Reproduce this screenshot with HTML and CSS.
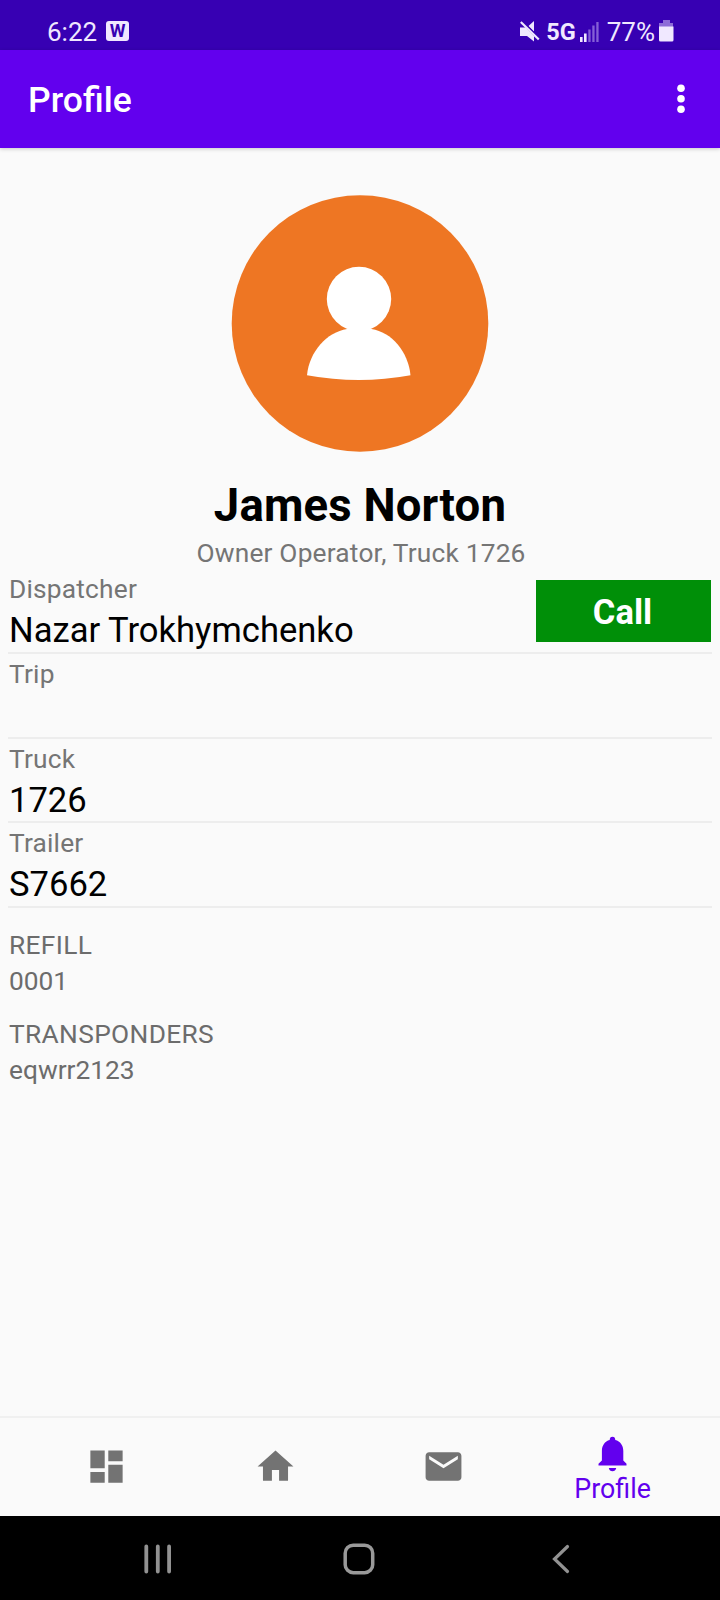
FILE: index.html
```html
<!DOCTYPE html>
<html lang="en">
<head>
<meta charset="utf-8">
<title>Profile</title>
<link rel="stylesheet" href="styles.css">
</head>
<body>
<div class="screen">
  <div class="status-bar">
    <span class="clock">6:22</span>
    <span class="badge">W</span>
    <span class="spacer"></span>
    <svg class="mute" width="20" height="22" viewBox="0 0 20 22" fill="#f0e8ff"><path d="M0 7.500h5.500l8.500 8.500v5.500L7 16H0zM8.500 6L14 1v10.500z"/><path d="M3.500 2.300L20 18.800" stroke="#3700b3" stroke-width="1.400"/><path d="M.8 2l18 17.500" stroke="#f0e8ff" stroke-width="2.200"/></svg>
    <span class="network">5G</span>
    <svg class="signal" width="20" height="21" viewBox="0 0 20 21"><path fill="#f0e8ff" d="M0 16h2.600v5H0zM4 12.500h2.600V21H4z"/><path fill="#8560d6" d="M8.300 8.500h2.300V21H8.300zM12.300 4.500h2.300V21h-2.300zM16.300 1h2.300v20h-2.300z"/></svg>
    <span class="percent">77%</span>
    <svg class="battery" width="15" height="22" viewBox="0 0 15 22"><path fill="#8d6bd8" d="M4 0h7v3h3v4H0V3h4z"/><path fill="#f0e8ff" d="M0 6.500h14.500V20q0 1.500-1.500 1.500H1.500Q0 21.500 0 20z"/></svg>
  </div>
  <header class="app-bar">
    <h1 class="title">Profile</h1>
    <svg class="more" width="8" height="30" viewBox="0 0 8 30" fill="#fff"><circle cx="4" cy="4.200" r="3.800"/><circle cx="4" cy="14.800" r="3.800"/><circle cx="4" cy="25.300" r="3.800"/></svg>
  </header>
  <main class="content">
    <svg class="avatar" width="258" height="258" viewBox="0 0 258 258"><circle cx="129" cy="128.500" r="128.300" fill="#ee7623"/><g fill="#fff"><circle cx="128" cy="104" r="32.200"/><path d="M76 180.300C78 157 96 137 116 134h24.500c20 3 37 23 39 46.300q-51.500 9.500-103.500 0z"/></g></svg>
    <h2 class="name">James Norton</h2>
    <p class="role">Owner Operator, Truck 1726</p>
    <section class="fields">
      <div class="field">
        <div class="field-text"><div class="label">Dispatcher</div><div class="value">Nazar Trokhymchenko</div></div>
        <button class="call">Call</button>
      </div>
      <div class="field"><div class="field-text"><div class="label">Trip</div><div class="value"></div></div></div>
      <div class="field"><div class="field-text"><div class="label">Truck</div><div class="value">1726</div></div></div>
      <div class="field"><div class="field-text"><div class="label">Trailer</div><div class="value">S7662</div></div></div>
    </section>
    <section class="extra"><div class="caps">REFILL</div><div>0001</div></section>
    <section class="extra"><div class="caps">TRANSPONDERS</div><div>eqwrr2123</div></section>
  </main>
  <nav class="tabs">
    <a class="tab"><svg width="43" height="43" viewBox="0 0 24 24" fill="#737373"><path d="M3 13h8V3H3v10zm0 8h8v-6H3v6zm10 0h8V11h-8v10zm0-18v6h8V3h-8z"/></svg></a>
    <a class="tab"><svg width="43" height="43" viewBox="0 0 24 24" fill="#737373"><path d="M10 20v-6h4v6h5v-8h3L12 3 2 12h3v8z"/></svg></a>
    <a class="tab"><svg width="43" height="43" viewBox="0 0 24 24" fill="#737373"><path d="M20 4H4c-1.100 0-1.990.9-1.990 2L2 18c0 1.100.9 2 2 2h16c1.100 0 2-.9 2-2V6c0-1.100-.9-2-2-2zm0 4l-8 5-8-5V6l8 5 8-5v2z"/></svg></a>
    <a class="tab active"><svg width="30" height="36" viewBox="0 0 30 36" fill="#6200ee"><path d="M10.800 32h7.400c-.5 2.200-1.700 3.300-3.700 3.300s-3.200-1.100-3.700-3.300zM14.500.7c1.800 0 2.800 1.200 2.800 3.400 5 1.200 8 5.500 8 10.900v9.500l3.200 3.200v1.800H.5v-1.800l3.400-3.200V15c0-5.400 2.900-9.700 7.800-10.900 0-2.200 1-3.400 2.800-3.400z"/></svg><span>Profile</span></a>
  </nav>
  <div class="system-nav">
    <svg width="28" height="30" viewBox="0 0 28 30" stroke="#929292" stroke-width="3.800" stroke-linecap="round"><path d="M2.300 2.500v25M13.800 2.500v25M25.100 2.500v25"/></svg>
    <svg class="home-key" width="32" height="32" viewBox="0 0 32 32" fill="none" stroke="#999" stroke-width="3.500"><rect x="2.200" y="2.200" width="27.500" height="27.500" rx="8"/></svg>
    <svg width="18" height="30" viewBox="0 0 18 30" fill="none" stroke="#929292" stroke-width="3.200" stroke-linecap="round"><path d="M15.500 2.500L2.500 15l13 12.500"/></svg>
  </div>
</div>
</body>
</html>
```
FILE: styles.css
```css
* { box-sizing: border-box; }
body { margin: 0; font-family: Roboto, sans-serif; background: #fafafa; }
h1, h2, p { margin: 0; }
.screen { width: 720px; height: 1600px; display: flex; flex-direction: column; }
.status-bar { height: 50px; background: #3700b3; color: #f0e8ff; display: flex; align-items: flex-start; padding: 0 46px 0 47px; }
.clock, .percent { font-size: 26px; line-height: 31px; padding-top: 17px; }
.badge { width: 23px; height: 20px; margin: 21px 0 0 9px; border-radius: 3px; background: #f0e8ff; color: #3700b3; font-size: 18px; font-weight: 700; line-height: 20px; text-align: center; }
.spacer { flex: 1; }
.mute { margin-top: 20px; }
.network { font-size: 23.500px; font-weight: 700; line-height: 28px; padding-top: 18px; margin-left: 6px; }
.signal { margin: 21px 0 0 4px; }
.percent { margin-left: 7px; }
.battery { margin: 20px 0 0 4px; }
.app-bar { height: 98px; background: #6200ee; display: flex; align-items: center; justify-content: space-between; padding: 0 35px 0 28px; box-shadow: 0 1px 4px rgba(0,0,0,.2); z-index: 1; }
.title { color: #fff; font-size: 35.500px; font-weight: 500; line-height: 42px; padding-top: 2px; }
.more { margin-top: 0; }
.content { flex: 1; display: flex; flex-direction: column; padding: 46px 8px 0; }
.avatar { align-self: center; flex: none; margin-top: 1px; }
.name { text-align: center; font-size: 45.500px; font-weight: 700; line-height: 54px; letter-spacing: .2px; margin-top: 26px; color: #000; }
.role { text-align: center; font-size: 26.300px; line-height: 32px; letter-spacing: .2px; margin-top: 4px; padding-left: 2px; color: #757575; }
.fields { display: flex; flex-direction: column; }
.field { height: 84.670px; border-bottom: 2px solid #ededed; display: flex; justify-content: space-between; padding-top: 4px; }
.fields .field:first-child { height: 85px; }
.field-text { padding-left: 1px; }
.label { color: #757575; font-size: 26.300px; line-height: 32px; letter-spacing: .2px; }
.value { color: #000; font-size: 34.600px; line-height: 48px; padding-top: 1px; }
.call { width: 175px; height: 62px; margin: 7px 1px 0 0; padding: 2px 2px 0 0; border: 0; background: #008f08; color: #fff; font-family: inherit; font-weight: 700; font-size: 34.500px; }
.extra { color: #6c6c6c; font-size: 26.300px; line-height: 36px; margin-top: 17px; padding-left: 1px; }
.caps { letter-spacing: .35px; }
.fields + .extra { margin-top: 19px; }
.tabs { height: 100px; border-top: 2px solid #f0f0f0; background: #fafafa; display: flex; align-items: center; padding: 0 22px 1px; }
.tab { flex: 1; display: flex; flex-direction: column; align-items: center; }
.active { color: #6200ee; font-size: 26.800px; line-height: 32px; padding: 7px 1px 0 0; gap: 1px; }
.system-nav { height: 84px; background: #000; display: flex; align-items: center; justify-content: space-between; padding: 2px 150px 0 144px; }
.home-key { margin-right: 6px; }
```
